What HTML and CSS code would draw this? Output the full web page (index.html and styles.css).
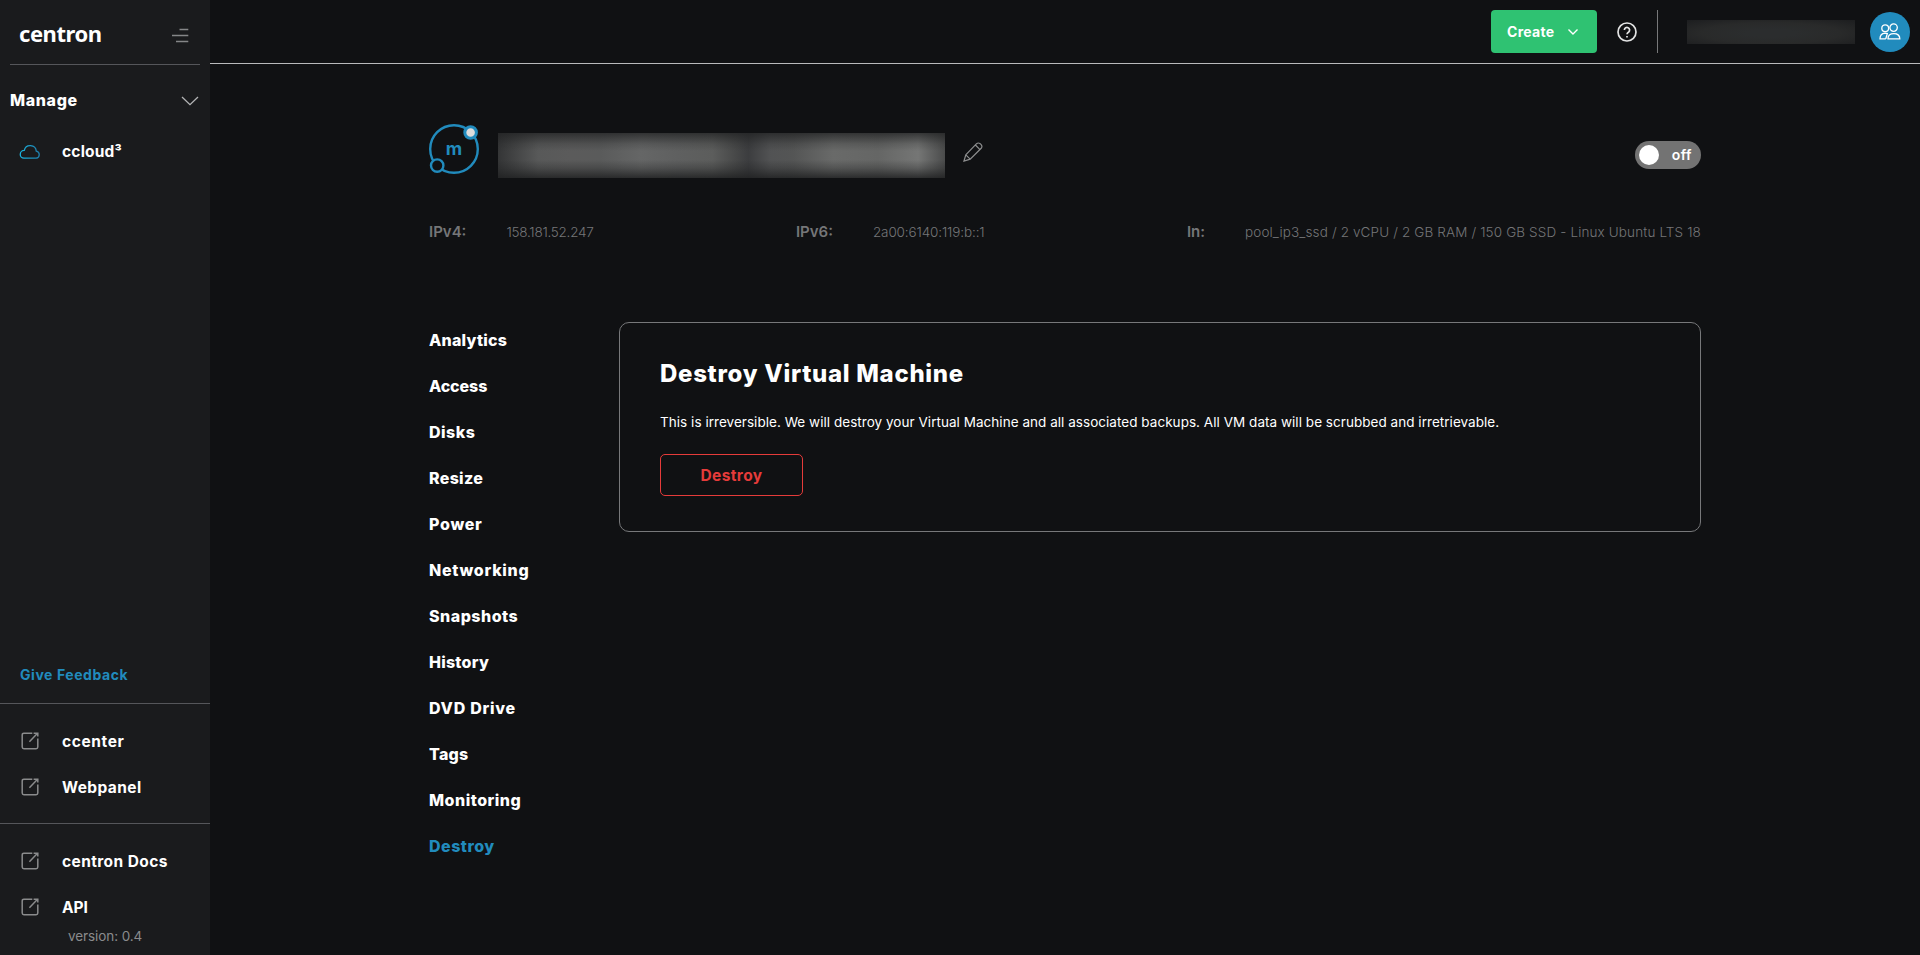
FILE: index.html
```html
<!DOCTYPE html>
<html lang="en">
<head>
<meta charset="utf-8">
<title>centron ccloud³ – Destroy Virtual Machine</title>
<link rel="stylesheet" href="styles.css">
</head>
<body>
<svg class="sprite" aria-hidden="true">
  <symbol id="external" viewBox="0 0 18 18"><path d="M11.300 1.200H2.900Q1.200 1.200 1.200 2.900v12.200q0 1.700 1.700 1.700h12.200q1.700 0 1.700-1.700V6.600M8.400 9.800 15.800 2M12.600 1.200h4.200v3.400"/></symbol>
</svg>
<aside class="sidebar">
  <div class="brand">
    <span class="brand-name">centron</span>
    <svg class="burger" viewBox="0 0 17 15"><path d="M7.500 1.500H16.300M0 7.500H16.300M4 13.500H16.300"/></svg>
  </div>
  <div class="group"><span>Manage</span>
    <svg class="chevron" viewBox="0 0 18 10"><path d="M1 1 9 8.600 17 1"/></svg>
  </div>
  <a class="side-link cloud-link">
    <svg class="cloud" viewBox="0 0 22 16"><defs><linearGradient id="cg" x1="0" x2="1"><stop offset="0" stop-color="#19b5e0"/><stop offset="1" stop-color="#1f7dab"/></linearGradient></defs><path d="M5 14.200H17.200A3.600 3.600 0 0 0 17.300 7.100 6.100 6.100 0 0 0 5.300 6.400 3.900 3.900 0 0 0 5 14.200Z" stroke="url(#cg)"/></svg>
    <span class="label">ccloud³</span>
  </a>
  <div class="side-bottom">
    <a class="feedback">Give Feedback</a>
    <div class="side-section">
      <a class="side-link"><svg class="ext"><use href="#external"/></svg><span class="label wide">ccenter</span></a>
      <a class="side-link"><svg class="ext"><use href="#external"/></svg><span class="label">Webpanel</span></a>
    </div>
    <div class="side-section last">
      <a class="side-link"><svg class="ext"><use href="#external"/></svg><span class="label">centron Docs</span></a>
      <a class="side-link"><svg class="ext"><use href="#external"/></svg><span class="label tight">API</span></a>
    </div>
    <div class="version">version: 0.4</div>
  </div>
</aside>
<div class="page">
  <header class="topbar">
    <button class="create"><span>Create</span><svg viewBox="0 0 12 8"><path d="M1.500 1.500 6 6 10.500 1.500"/></svg></button>
    <svg class="help" viewBox="0 0 20 20"><circle cx="10" cy="10" r="9"/><path d="M7.400 8a2.600 2.600 0 1 1 4.300 2C10.500 10.800 10 11.200 10 12.300M10 14v1.500"/></svg>
    <span class="divider"></span>
    <span class="user-name"></span>
    <span class="avatar"><svg viewBox="0 0 22 17"><circle cx="6.200" cy="5.200" r="3.400"/><circle cx="14.600" cy="4.600" r="3.700"/><path d="M6.800 15.800H1C1 12.400 2.800 10.300 6 10.100L8.300 10.500L6.800 15.800M9 15.800H20.800C20.800 12.500 18.300 10.700 14.900 10.700S9 12.500 9 15.800Z"/></svg></span>
  </header>
  <main class="content">
    <section class="vm-head">
      <span class="vm-logo"><svg viewBox="0 0 50 50"><circle cx="25" cy="25" r="23.800"/><circle class="knob" cx="8.200" cy="41.600" r="6.200"/><circle class="knob on" cx="41.600" cy="8.500" r="5.800"/></svg><b>m</b></span>
      <span class="vm-name"></span>
      <svg class="pencil" viewBox="0 0 20 20"><path d="M1 19 2.800 12.800 13.600 1.700Q15.200.3 17.200 1.700L18.300 2.800Q19.600 4.600 18.200 6.300L7.200 17.200ZM2.800 12.800 7.200 17.200M12.400 3 17 7.600"/></svg>
      <span class="toggle"><i></i><span>off</span></span>
    </section>
    <dl class="facts">
      <div><dt>IPv4:</dt><dd class="ipv4">158.181.52.247</dd></div>
      <div><dt>IPv6:</dt><dd class="ipv6">2a00:6140:119:b::1</dd></div>
      <div><dt>In:</dt><dd class="specs">pool_ip3_ssd / 2 vCPU / 2 GB RAM / 150 GB SSD - Linux Ubuntu LTS 18</dd></div>
    </dl>
    <div class="columns">
      <nav class="tabs">
        <a>Analytics</a>
        <a>Access</a>
        <a>Disks</a>
        <a>Resize</a>
        <a>Power</a>
        <a>Networking</a>
        <a>Snapshots</a>
        <a>History</a>
        <a>DVD Drive</a>
        <a>Tags</a>
        <a>Monitoring</a>
        <a class="active">Destroy</a>
      </nav>
      <section class="card">
        <h1>Destroy Virtual Machine</h1>
        <p>This is irreversible. We will destroy your Virtual Machine and all associated backups. All VM data will be scrubbed and irretrievable.</p>
        <button class="destroy">Destroy</button>
      </section>
    </div>
  </main>
</div>
</body>
</html>
```
FILE: styles.css
```css
* { box-sizing: border-box; }
body {
  margin: 0;
  display: flex;
  height: 955px;
  overflow: hidden;
  background: #101113;
  color: #fff;
  font-family: Inter, "Open Sans", sans-serif;
}
svg { display: block; fill: none; stroke: currentColor; flex: none; }
button { font-family: inherit; }
.sprite { position: absolute; width: 0; height: 0; }

.sidebar {
  width: 210px;
  flex: none;
  display: flex;
  flex-direction: column;
  background: #1a1b1d;
  font-weight: 700;
  font-size: 15.5px;
}
.brand {
  height: 65px;
  margin: 0 10px;
  padding: 5px 11px 0 9px;
  display: flex;
  align-items: center;
  justify-content: space-between;
  border-bottom: 1px solid #55565a;
}
.brand-name { font: 700 22px/30px "Noto Sans", sans-serif; letter-spacing: -0.45px; margin-bottom: 3px; }
.burger { width: 17px; height: 15px; color: #858688; stroke-width: 1.6; margin-top: 2px; }
.group {
  height: 46px;
  margin: 12px 11px 0 10px;
  display: flex;
  align-items: center;
  justify-content: space-between;
  font-size: 16px;
  font-weight: 800;
  letter-spacing: 0.65px;
}
.chevron { width: 18px; height: 10px; color: #b4b5b6; stroke-width: 1.3; margin-top: 2px; }
.side-link { height: 46px; padding-left: 21px; display: flex; align-items: center; }
.label { margin: 0 0 0 23px; letter-spacing: 0.4px; }
.label.wide { letter-spacing: 0.6px; }
.label.tight { letter-spacing: 0; }
.cloud-link { margin-top: 5px; padding-left: 19px; }
.cloud { width: 22px; height: 16px; stroke-width: 1.3; margin-top: 1px; }
.cloud-link .label { margin: 1px 0 0 21px; letter-spacing: 0.2px; }
.ext { width: 18px; height: 18px; color: #8a8b8c; stroke-width: 1.5; }
.side-bottom { margin-top: auto; }
.feedback {
  display: block;
  height: 28px;
  margin-bottom: 14px;
  padding: 0 20px;
  line-height: 28px;
  font-size: 14px;
  letter-spacing: 0.56px;
  color: #218bbd;
}
.side-section { border-top: 1px solid #55565a; padding: 14px 0 13px; }
.side-section.last { padding: 14px 0 0; }
.version {
  height: 24px;
  margin: -6px 0 7px;
  padding-left: 68px;
  line-height: 24px;
  font-weight: 400;
  font-size: 13.5px;
  letter-spacing: -0.08px;
  color: #8a8b8d;
}

.page { flex: 1; min-width: 0; }
.topbar {
  height: 64px;
  border-bottom: 1px solid #b9babc;
  padding: 10px 10px 10px 0;
  display: flex;
  justify-content: flex-end;
  align-items: center;
}
.create {
  width: 106px;
  height: 43px;
  padding: 0 18px 0 16px;
  display: flex;
  align-items: center;
  justify-content: space-between;
  border: 0;
  border-radius: 4px;
  background: #2fc272;
  color: #fff;
  font-weight: 700;
  font-size: 14px;
  letter-spacing: 0.3px;
}
.create span { margin-bottom: 1px; }
.create svg { width: 12px; height: 8px; stroke-width: 1.4; }
.help { width: 20px; height: 20px; margin-left: 20px; stroke-width: 1.7; color: #e3e4e4; }
.divider { width: 1px; height: 43px; margin: 0 29px 0 20px; background: #77787a; }
.user-name {
  width: 168px;
  height: 24px;
  background: radial-gradient(ellipse 75% 80% at 50% 55%, #2b2d2e 20%, #292a2a 55%, #1b1c1e 100%);
}
.avatar {
  width: 40px;
  height: 40px;
  margin-left: 15px;
  display: flex;
  align-items: center;
  justify-content: center;
  border-radius: 50%;
  background: #218bbd;
}
.avatar svg { width: 22px; height: 17px; stroke-width: 1.3; }

.content { width: 1491px; padding: 60px 0 0 219px; }
.vm-head { display: flex; height: 54px; }
.vm-logo { width: 50px; height: 50px; display: grid; place-items: center; color: #218bbd; }
.vm-logo svg, .vm-logo b { grid-area: 1 / 1; }
.vm-logo svg { width: 50px; height: 50px; stroke-width: 2.4; }
.vm-logo b { font-size: 18px; line-height: 20px; }
.knob { fill: #101113; }
.knob.on { fill: #dcdcdc; stroke-width: 3; }
.vm-name {
  width: 447px;
  height: 45px;
  margin: 9px 0 0 19px;
  background:
    linear-gradient(180deg, rgba(32,33,34,.75) 0%, rgba(32,33,34,.2) 24%, transparent 40%, transparent 60%, rgba(32,33,34,.3) 78%, rgba(32,33,34,.85) 100%),
    linear-gradient(90deg, #343536 0%, #585959 9%, #5b5b5b 16%, #5a5b5b 23%, #656666 32%, #5f6060 40%, #5c5d5c 48%, #484949 53%, #3c3d3f 56%, #525354 61%, #545555 66%, #696a69 75%, #656665 85%, #757675 94%, #4a4b4b 100%);
}
.pencil { width: 20px; height: 20px; margin: 18px 0 0 18px; stroke-width: 1.2; color: #8d8e8f; }
.toggle {
  width: 66px;
  height: 28px;
  margin: 17px 0 0 auto;
  padding: 0 9px 0 4px;
  display: flex;
  align-items: center;
  justify-content: space-between;
  border-radius: 14px;
  background: #737373;
  font-size: 14px;
  font-weight: 600;
  letter-spacing: 0.5px;
}
.toggle i { width: 20px; height: 20px; border-radius: 50%; background: #fff; }
.toggle span { margin-bottom: 1px; }

.facts {
  display: flex;
  justify-content: space-between;
  height: 28px;
  margin: 40px 0 0;
  line-height: 28px;
  color: #757678;
}
.facts div { display: flex; }
.facts dt { font-size: 15px; font-weight: 600; letter-spacing: 0; }
.facts dd { margin: 0 0 0 40px; font-size: 13.5px; font-weight: 300; }
.ipv4 { letter-spacing: -0.25px; }
.ipv6 { letter-spacing: -0.13px; }
.specs { letter-spacing: 0.13px; }

.columns { display: flex; align-items: flex-start; margin-top: 71px; }
.tabs { width: 190px; flex: none; font-size: 16px; font-weight: 800; letter-spacing: 0.5px; }
.tabs a { display: block; height: 46px; line-height: 46px; }
.tabs a:nth-child(1), .tabs a:nth-child(8), .tabs a:nth-child(10) { letter-spacing: 0.23px; }
.tabs a:nth-child(2) { letter-spacing: -0.1px; }
.tabs a:nth-child(4) { letter-spacing: 0.3px; }
.tabs a:nth-child(5), .tabs a:nth-child(6), .tabs a:nth-child(9) { letter-spacing: 0.72px; }
.tabs a.active { color: #218bbd; }
.card {
  flex: 1;
  height: 210px;
  margin-top: 5px;
  padding: 33px 40px;
  border: 1px solid #77787a;
  border-radius: 10px;
}
.card h1 { margin: 0; font-size: 24px; line-height: 36px; font-weight: 800; letter-spacing: 0.7px; }
.card p { margin: 18px 0 20px; font-size: 13.5px; line-height: 24px; letter-spacing: 0.038px; }
.destroy {
  display: block;
  width: 143px;
  height: 42px;
  padding: 0;
  border: 1px solid #e53b3a;
  border-radius: 5px;
  background: none;
  color: #e53b3a;
  font-size: 15.5px;
  font-weight: 700;
  letter-spacing: 0.38px;
}
```
